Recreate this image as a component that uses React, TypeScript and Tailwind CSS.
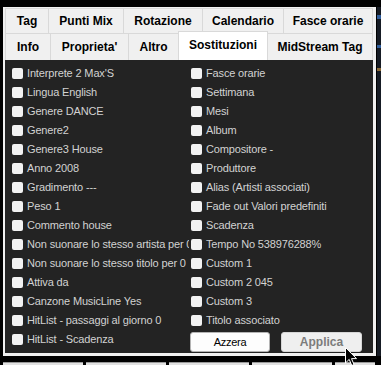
import React from "react";

const leftItems = [
  "Interprete 2 Max'S",
  "Lingua English",
  "Genere DANCE",
  "Genere2",
  "Genere3 House",
  "Anno 2008",
  "Gradimento ---",
  "Peso 1",
  "Commento house",
  "Non suonare lo stesso artista per 0",
  "Non suonare lo stesso titolo per 0",
  "Attiva da",
  "Canzone MusicLine Yes",
  "HitList - passaggi al giorno 0",
  "HitList - Scadenza",
];

const rightItems = [
  "Fasce orarie",
  "Settimana",
  "Mesi",
  "Album",
  "Compositore -",
  "Produttore",
  "Alias (Artisti associati)",
  "Fade out Valori predefiniti",
  "Scadenza",
  "Tempo No 538976288%",
  "Custom 1",
  "Custom 2 045",
  "Custom 3",
  "Titolo associato",
];

function Check({ label }: { label: string }) {
  return (
    <div className="flex h-[19px] items-center gap-[4px] whitespace-nowrap">
      <span className="h-[11px] w-[11px] shrink-0 rounded-[2px] bg-[#f2f2f2]" />
      <span className="text-[11px] leading-none tracking-[-0.15px] text-[#d2d2d2]">{label}</span>
    </div>
  );
}

function Tab({ label, w, selected }: { label: string; w: string; selected?: boolean }) {
  return (
    <div
      className={
        selected
          ? `relative z-10 -mt-[2px] flex h-[29px] ${w} items-center justify-center border-x border-t border-[#d9d9d9] bg-white pb-[3px] text-[12px] font-bold text-black`
          : `flex h-full ${w} items-center justify-center border-l border-t border-[#d9d9d9] bg-[#f0f0f0] text-[12px] font-bold text-black`
      }
    >
      {label}
    </div>
  );
}

export default function App() {
  return (
    <div
      className="relative h-[365px] w-[381px] overflow-hidden bg-black"
      style={{ fontFamily: '"Liberation Sans", Arial, sans-serif' }}
    >
      <div className="h-[7px]" />
      <div className="flex">
        <div className="w-[3px]" />
        <div className="flex h-[349px] w-[373px] flex-col bg-[#f0f0f0] pb-[3px] pl-[2px] pr-[3px] pt-[1px]">
          <div className="flex h-[25px]">
            <Tab label="Tag" w="w-[43px]" />
            <Tab label="Punti Mix" w="w-[75px]" />
            <Tab label="Rotazione" w="w-[79px]" />
            <Tab label="Calendario" w="w-[81px]" />
            <div className="flex h-full w-[90px] items-center justify-center border-x border-t border-[#d9d9d9] bg-[#f0f0f0] text-[12px] font-bold text-black">
              Fasce orarie
            </div>
          </div>
          <div className="flex h-[27px] items-end">
            <Tab label="Info" w="w-[45px]" />
            <Tab label="Proprieta'" w="w-[78px]" />
            <Tab label="Altro" w="w-[50px]" />
            <Tab label="Sostituzioni" w="w-[90px]" selected />
            <div className="flex h-full w-[105px] items-center justify-center border-r border-t border-[#d9d9d9] bg-[#f0f0f0] text-[12px] font-bold text-black">
              MidStream Tag
            </div>
          </div>
          <div className="flex h-[293px] bg-[#232323] pl-[7px] pt-[4px]">
            <div className="w-[177px] overflow-hidden">
              {leftItems.map((t) => (
                <Check key={t} label={t} />
              ))}
            </div>
            <div className="ml-[2px] flex flex-col">
              {rightItems.map((t) => (
                <Check key={t} label={t} />
              ))}
              <div className="-ml-[1px] mt-[2px] flex gap-[11px]">
                <button className="h-[20px] w-[80px] rounded-[3px] border border-[#b4b4b4] bg-[#fdfdfd] text-[11px] tracking-[-0.3px] text-black">
                  Azzera
                </button>
                <button className="h-[20px] w-[81px] rounded-[3px] border border-[#d6d6d6] bg-[#efefef] text-[12px] font-bold text-[#7c7c7c]">
                  Applica
                </button>
              </div>
            </div>
          </div>
        </div>
        <div className="flex w-[5px]">
          <div className="w-[1px] bg-black" />
          <div className="flex w-[4px] flex-col bg-[#161b24]">
            <div className="mt-[8px] h-[4px] bg-[#2f5d9c]" />
            <div className="mt-[26px] h-[3px] bg-[#2f5d9c]" />
            <div className="mt-[20px] h-[3px] bg-[#8a6a3a]" />
          </div>
        </div>
      </div>
      <div className="flex gap-[3px] pl-[3px] pt-[6px]">
        <div className="h-[10px] w-[80px] border-t border-[#9a9a9a] bg-[#e1e1e1]" />
        <div className="h-[10px] w-[80px] border-t border-[#9a9a9a] bg-[#e1e1e1]" />
        <div className="h-[10px] w-[80px] border-t border-[#9a9a9a] bg-[#e1e1e1]" />
        <div className="h-[10px] w-[80px] border-t border-[#9a9a9a] bg-[#e1e1e1]" />
        <div className="h-[10px] w-[40px] border-t border-[#9a9a9a] bg-[#e1e1e1]" />
      </div>
      <svg
        className="absolute left-[345px] top-[347px]"
        width="13"
        height="20"
        viewBox="0 0 13 20"
      >
        <path
          d="M0.5 0.5 L0.5 16 L4.2 12.4 L6.8 18.5 L9 17.5 L6.5 11.6 L11.5 11.6 Z"
          fill="black"
          stroke="white"
          strokeWidth="1"
        />
      </svg>
    </div>
  );
}
